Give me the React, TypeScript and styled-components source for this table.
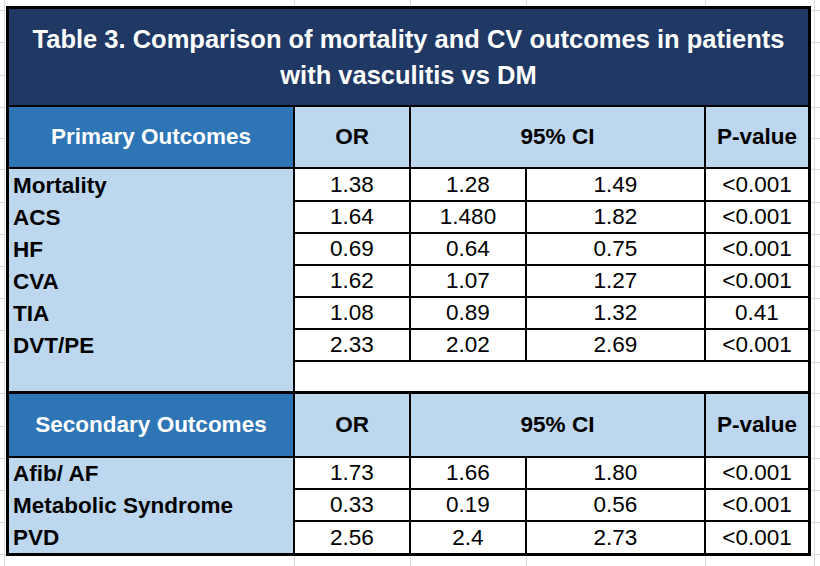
import React from "react";
import styled, { createGlobalStyle } from "styled-components";

const gridLine = "#d9d9d9";
const hLines = [10, 42, 75, 107, 138, 169, 202, 234, 266, 298, 330, 362, 393, 426, 458, 490, 522, 554];
const vLines = [4, 294, 410, 526, 705, 814];
const bgImages = [
  ...hLines.map(() => `linear-gradient(${gridLine}, ${gridLine})`),
  ...vLines.map(() => `linear-gradient(${gridLine}, ${gridLine})`),
].join(", ");
const bgPos = [...hLines.map((y) => `0 ${y}px`), ...vLines.map((x) => `${x}px 0`)].join(", ");
const bgSize = [...hLines.map(() => "100% 1px"), ...vLines.map(() => "1px 100%")].join(", ");

const Global = createGlobalStyle`
  html, body { margin: 0; padding: 0; }
  body {
    width: 820px;
    height: 566px;
    overflow: hidden;
    background-color: #ffffff;
    background-image: ${bgImages};
    background-position: ${bgPos};
    background-size: ${bgSize};
    background-repeat: no-repeat;
    font-family: "Liberation Sans", Arial, sans-serif;
  }
`;

const Sheet = styled.div`
  padding: 6px 0 0 6px;
`;

const Frame = styled.div`
  box-sizing: border-box;
  width: 805px;
  border: 3px solid #000;
  display: grid;
  grid-template-columns: 286px 116px 116px 179px 102px;
  background: #fff;
`;

const Title = styled.div`
  grid-column: 1 / span 5;
  box-sizing: border-box;
  height: 98px;
  background: #203864;
  border-bottom: 2px solid #000;
  color: #fff;
  font-weight: bold;
  font-size: 25.5px;
  line-height: 36px;
  text-align: center;
  display: flex;
  align-items: center;
  justify-content: center;
  padding: 0 10px;
`;

const HeadCell = styled.div<{ $dark?: boolean; $span?: number; $h: number; $last?: boolean }>`
  box-sizing: border-box;
  height: ${(p) => p.$h}px;
  grid-column: span ${(p) => p.$span ?? 1};
  background: ${(p) => (p.$dark ? "#2e75b6" : "#bdd7ee")};
  color: ${(p) => (p.$dark ? "#fff" : "#000")};
  border-right: ${(p) => (p.$last ? "none" : "2px solid #000")};
  border-bottom: 2px solid #000;
  font-weight: bold;
  font-size: 22.5px;
  display: flex;
  align-items: center;
  justify-content: center;
`;

const Label = styled.div<{ $h: number; $ruled?: boolean }>`
  box-sizing: border-box;
  height: ${(p) => p.$h}px;
  background: #bdd7ee;
  border-right: 2px solid #000;
  border-bottom: ${(p) => (p.$ruled ? "3px solid #000" : "none")};
  font-weight: bold;
  font-size: 22.5px;
  color: #000;
  padding-left: 4px;
  display: flex;
  align-items: center;
  white-space: nowrap;
`;

const Num = styled.div<{ $h: number; $last?: boolean; $noBottom?: boolean }>`
  box-sizing: border-box;
  height: ${(p) => p.$h}px;
  border-right: ${(p) => (p.$last ? "none" : "2px solid #000")};
  border-bottom: ${(p) => (p.$noBottom ? "none" : "2px solid #000")};
  font-size: 22.5px;
  color: #000;
  display: flex;
  align-items: center;
  justify-content: center;
`;

const Blank = styled.div`
  grid-column: span 4;
  box-sizing: border-box;
  height: 32px;
  background: #fff;
  border-bottom: 3px solid #000;
`;

type Row = [string, string, string, string, string];

const primary: Row[] = [
  ["Mortality", "1.38", "1.28", "1.49", "<0.001"],
  ["ACS", "1.64", "1.480", "1.82", "<0.001"],
  ["HF", "0.69", "0.64", "0.75", "<0.001"],
  ["CVA", "1.62", "1.07", "1.27", "<0.001"],
  ["TIA", "1.08", "0.89", "1.32", "0.41"],
  ["DVT/PE", "2.33", "2.02", "2.69", "<0.001"],
];

const secondary: Row[] = [
  ["Afib/ AF", "1.73", "1.66", "1.80", "<0.001"],
  ["Metabolic Syndrome", "0.33", "0.19", "0.56", "<0.001"],
  ["PVD", "2.56", "2.4", "2.73", "<0.001"],
];

const Header = ({ title, h }: { title: string; h: number }) => (
  <>
    <HeadCell $dark $h={h}>{title}</HeadCell>
    <HeadCell $h={h}>OR</HeadCell>
    <HeadCell $h={h} $span={2}>95% CI</HeadCell>
    <HeadCell $h={h} $last>P-value</HeadCell>
  </>
);

const DataRows = ({ rows, heights, lastNoBottom }: { rows: Row[]; heights: number[]; lastNoBottom?: boolean }) => (
  <>
    {rows.map((r, i) => {
      const h = heights[i];
      const nb = lastNoBottom && i === rows.length - 1;
      return (
        <React.Fragment key={r[0]}>
          <Label $h={h}>{r[0]}</Label>
          <Num $h={h} $noBottom={nb}>{r[1]}</Num>
          <Num $h={h} $noBottom={nb}>{r[2]}</Num>
          <Num $h={h} $noBottom={nb}>{r[3]}</Num>
          <Num $h={h} $last $noBottom={nb}>{r[4]}</Num>
        </React.Fragment>
      );
    })}
  </>
);

export default function App() {
  return (
    <>
      <Global />
      <Sheet>
        <Frame>
          <Title>
            Table 3. Comparison of mortality and CV outcomes in patients
            <br />
            with vasculitis vs DM
          </Title>
          <Header title="Primary Outcomes" h={62} />
          <DataRows rows={primary} heights={[33, 32, 32, 32, 32, 32]} />
          <Label $h={32} $ruled></Label>
          <Blank />
          <Header title="Secondary Outcomes" h={64} />
          <DataRows rows={secondary} heights={[32, 32, 31]} lastNoBottom />
        </Frame>
      </Sheet>
    </>
  );
}
